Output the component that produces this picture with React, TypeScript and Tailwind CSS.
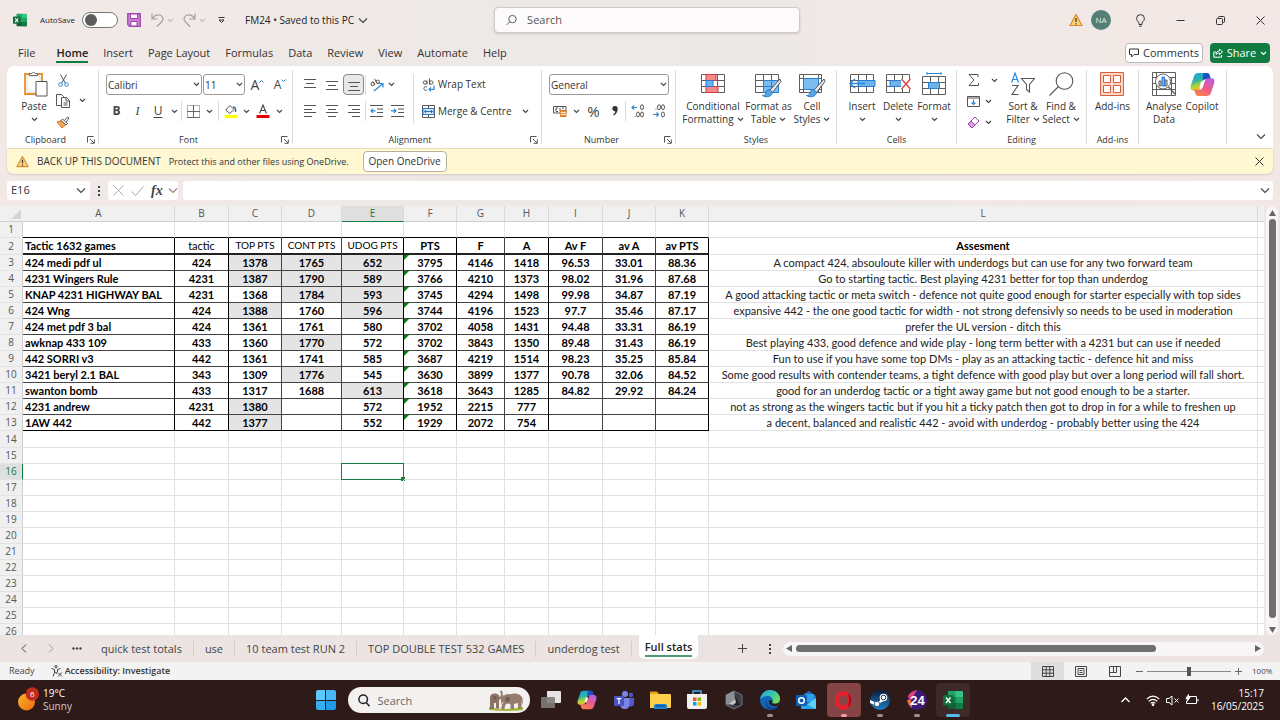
import React from 'react';

type Kids = { children?: React.ReactNode; className?: string };

const Chev = ({ className = 'text-[#444]' }: { className?: string }) => (
  <svg width="7" height="5" viewBox="0 0 7 5" fill="none" stroke="currentColor" strokeWidth="1.1" className={`shrink-0 ${className}`}>
    <path d="M1 1l2.500 2.500L6 1" />
  </svg>
);

const WideChev = ({ className = 'text-[#444]' }: { className?: string }) => (
  <svg width="10" height="7" viewBox="0 0 10 7" fill="none" stroke="currentColor" strokeWidth="1.1" className={`shrink-0 ${className}`}>
    <path d="M1 1.500l4 4 4-4" />
  </svg>
);

const Btn = ({ label, className = '', children }: Kids & { label: string }) => (
  <button type="button" aria-label={label} className={`flex shrink-0 items-center justify-center ${className}`}>
    {children}
  </button>
);

const VSep = ({ className = '' }: { className?: string }) => <div className={`w-px shrink-0 bg-[#dcdcdc] ${className}`} />;

const Launcher = () => (
  <svg width="8" height="8" viewBox="0 0 8 8" fill="none" stroke="#555" strokeWidth="1">
    <path d="M.5 6.500v-6h6M3 3l4 4M7.300 3.500v3.800H3.500" />
  </svg>
);

function Group({ label, launcher, className = '', children }: Kids & { label: string; launcher?: boolean }) {
  return (
    <section className={`flex shrink-0 ${className}`}>
      <div className="flex min-w-0 flex-1 flex-col">
        <div className="flex-1">{children}</div>
        <div className="flex h-[17px] items-center text-[9px] leading-3 text-[#333]">
          <span className="flex-1 text-center whitespace-nowrap">{label}</span>
          {launcher && (
            <Btn label={`${label} settings`} className="w-[14px]">
              <Launcher />
            </Btn>
          )}
        </div>
      </div>
      <VSep className="my-1" />
    </section>
  );
}

function Big({ icon, lines, below, inline, className = '' }: { icon: React.ReactNode; lines: string[]; below?: boolean; inline?: boolean; className?: string }) {
  return (
    <button type="button" className={`flex shrink-0 flex-col items-center text-[10px] leading-[13px] whitespace-nowrap text-[#333] ${className}`}>
      <span className="mb-1 flex h-6 items-center justify-center">{icon}</span>
      {lines.map((l, i) => (
        <span key={l} className="flex items-center gap-[3px]">
          {l}
          {inline && i === lines.length - 1 && <Chev />}
        </span>
      ))}
      {below && (
        <span className="flex h-[13px] items-center">
          <Chev />
        </span>
      )}
    </button>
  );
}

function Combo({ label, value, className = '' }: { label: string; value: string; className?: string }) {
  return (
    <div className={`grid h-[21px] items-center ${className}`}>
      <select aria-label={label} className="h-full w-full appearance-none rounded-[3px] border border-[#999] bg-white pl-[1px] text-[10px] leading-4 text-[#333] [grid-area:1/1]">
        <option>{value}</option>
      </select>
      <span className="pointer-events-none mr-[2px] justify-self-end [grid-area:1/1]">
        <Chev />
      </span>
    </div>
  );
}

const ExcelLogo = ({ size }: { size: number }) => (
  <svg width={size} height={size} viewBox="0 0 20 20">
    <path d="M6 1h7v6H5V2q0-1 1-1z" fill="#21a366" />
    <path d="M12.500 1H19q1 0 1 1v5h-7.500z" fill="#33c481" />
    <path d="M5 7h7.500v6H5z" fill="#107c41" />
    <path d="M12.500 7H20v6h-7.500z" fill="#21a366" />
    <path d="M5 13h15v5q0 1-1 1H6q-1 0-1-1z" fill="#185c37" />
    <path d="M12.500 13H20v5q0 1-1 1h-6.500z" fill="#107c41" />
    <rect x="0" y="5" width="10.500" height="10.500" rx="1" fill="#0f703b" />
    <path d="M3 7.500l4.500 5.500M7.500 7.500L3 13" stroke="#fff" strokeWidth="1.500" />
  </svg>
);

const CopilotLogo = ({ size, id }: { size: number; id: string }) => (
  <svg width={size} height={size} viewBox="0 0 24 24">
    <defs>
      <linearGradient id={`${id}a`} x1="0" y1="0" x2="0.300" y2="1">
        <stop offset="0" stopColor="#1a9ee8" />
        <stop offset="0.450" stopColor="#2bb5a8" />
        <stop offset="0.750" stopColor="#b5d334" />
        <stop offset="1" stopColor="#f7b52c" />
      </linearGradient>
      <linearGradient id={`${id}b`} x1="0.800" y1="0" x2="0.200" y2="1">
        <stop offset="0" stopColor="#b65fe6" />
        <stop offset="0.500" stopColor="#ee5a8c" />
        <stop offset="1" stopColor="#f9824a" />
      </linearGradient>
    </defs>
    <path d="M8 1h8c2 0 2.600 1 3 2.500L20 7h-5c-2 0-2.700 1-3.200 2.500L9.500 16C9 17.300 8 18 6.500 18H4c-3 0-4-2-3.200-5L4 3.500C4.600 1.800 6 1 8 1z" fill={`url(#${id}a)`} />
    <path d="M13 1h3c2 0 2.600 1 3 2.500L20 7h-5c-1.500 0-2.500.5-3 1.500z" fill="#1b50c8" />
    <path d="M16 23H8c-2 0-2.600-1-3-2.500L4 17h5c2 0 2.700-1 3.200-2.500L14.500 8C15 6.700 16 6 17.500 6H20c3 0 4 2 3.200 5L20 20.500c-.6 1.700-2 2.500-4 2.500z" fill={`url(#${id}b)`} />
    <path d="M10.500 9h3.200l-1.800 6H9z" fill="#fff" opacity="0.900" />
  </svg>
);

const WarnIcon = ({ size }: { size: number }) => (
  <svg width={size} height={size} viewBox="0 0 14 14">
    <path d="M7 1.500L13 12.500H1z" fill="#fbd27a" stroke="#e08a2c" strokeWidth="1.200" strokeLinejoin="round" />
    <path d="M7 5v4M7 10.200v1.300" stroke="#333" strokeWidth="1.300" />
  </svg>
);

const CloseIcon = () => (
  <svg width="9" height="9" viewBox="0 0 9 9" stroke="#333" strokeWidth="1">
    <path d="M.5.500l8 8M8.500.500l-8 8" />
  </svg>
);

const Lines = ({ rows }: { rows: number[][] }) => (
  <svg width="14" height="14" viewBox="0 0 14 14" stroke="#555" strokeWidth="1">
    {rows.map(([y, a, b]) => (
      <path key={y} d={`M${a} ${y + 0.5}H${b}`} />
    ))}
  </svg>
);

const Grid = () => (
  <path d="M.5.500h23v18H.5zM.5 6.500h23M.5 12.500h23M8.500.500v18M16.500.500v18" fill="#fff" stroke="#605e5c" />
);

const Brush = () => (
  <>
    <path d="M25 5L15 16l2.500 2.500L26 7.500z" fill="#e8e8e8" stroke="#555" />
    <path d="M15 15.500c-3 0-4 2-4.500 4.500-.3 1-1.500 1.500-3 1.500 3 2 9 2 10-3z" fill="#58a6e0" stroke="#2b7cd3" />
  </>
);

function TitleBar() {
  return (
    <header className="flex h-10 shrink-0 items-center">
      <div className="flex w-[494px] shrink-0 items-center pl-[13px]">
        <ExcelLogo size={14} />
        <label htmlFor="autosave" className="ml-[13px] w-[42px] text-[8px] whitespace-nowrap text-[#222]">AutoSave</label>
        <input
          id="autosave"
          type="checkbox"
          className="h-4 w-9 appearance-none rounded-full border border-[#777] bg-white before:mt-[1px] before:ml-[2px] before:block before:size-3 before:rounded-full before:bg-[#5c5c5c]"
        />
        <Btn label="Save" className="ml-2 w-4">
          <svg width="14" height="14" viewBox="0 0 14 14">
            <path d="M.7.700h12.600v12.600H2.500L.700 11.500z" fill="#c67fd0" stroke="#a044ad" strokeWidth="1.200" />
            <path d="M3.500 1h7v4.500h-7zM4 8.500h6V13H4z" fill="#fff" stroke="#a044ad" />
          </svg>
        </Btn>
        <Btn label="Undo" className="ml-[7px] w-4">
          <svg width="13" height="14" viewBox="0 0 13 14" fill="none" stroke="#a5a09f" strokeWidth="1.200">
            <path d="M1 .5v5.500h5.500M1.200 6C3 3 5.500 1.500 8.500 2c3.500.7 4.500 4.500 2 7L6 13.500" />
          </svg>
        </Btn>
        <Chev className="ml-[2px] text-[#bbb]" />
        <Btn label="Redo" className="ml-[7px] w-4">
          <svg width="13" height="14" viewBox="0 0 13 14" fill="none" stroke="#a5a09f" strokeWidth="1.200">
            <path d="M12 .5v5.500H6.500M11.800 6C10 3 7.500 1.500 4.500 2 1 2.700 0 6.500 2.500 9L7 13.500" />
          </svg>
        </Btn>
        <Chev className="ml-[2px] text-[#bbb]" />
        <Btn label="Customise toolbar" className="ml-[7px] w-4">
          <svg width="7" height="7" viewBox="0 0 7 7" fill="none" stroke="#333">
            <path d="M.5.500h6M1 3l2.500 2.500L6 3z" />
          </svg>
        </Btn>
        <button type="button" className="ml-4 flex items-center gap-1 text-[10px] whitespace-nowrap text-[#222]">
          FM24 • Saved to this PC <WideChev />
        </button>
      </div>
      <div className="flex h-[26px] w-[306px] items-center gap-[10px] rounded-[4px] border border-[#cfc9c7] bg-[#fcfafa] px-[11px] shadow-sm">
        <svg width="12" height="12" viewBox="0 0 12 12" fill="none" stroke="#555">
          <circle cx="7" cy="5" r="4" />
          <path d="M4.200 7.800L.7 11.300" />
        </svg>
        <input aria-label="Search" placeholder="Search" className="w-full min-w-0 bg-transparent text-[11px] outline-none placeholder:text-[#555]" />
      </div>
      <div className="flex flex-1 items-center justify-end">
        <WarnIcon size={14} />
        <button type="button" className="mr-[9px] ml-2 size-5 shrink-0 rounded-full bg-[#557f74] text-[8px] text-[#e5eeea]">NA</button>
        <Btn label="Tips" className="w-10">
          <svg width="9" height="13" viewBox="0 0 9 13" fill="none" stroke="#333">
            <path d="M3 8.500C1.500 7.500.6 6 .6 4.500a3.900 3.900 0 017.800 0C8.400 6 7.500 7.500 6 8.500v2H3zM3.300 12.200h2.400" />
          </svg>
        </Btn>
        <Btn label="Minimise" className="w-10">
          <svg width="9" height="3" viewBox="0 0 9 3" stroke="#333"><path d="M.5 1.500h8" /></svg>
        </Btn>
        <Btn label="Restore" className="w-10">
          <svg width="9" height="9" viewBox="0 0 9 9" fill="none" stroke="#333">
            <path d="M2.500 2V1.500q0-1 1-1h4q1 0 1 1v4q0 1-1 1H7" />
            <rect x=".5" y="2.500" width="6" height="6" rx="1" />
          </svg>
        </Btn>
        <Btn label="Close" className="w-10"><CloseIcon /></Btn>
      </div>
    </header>
  );
}

const menus = ['Insert', 'Page Layout', 'Formulas', 'Data', 'Review', 'View', 'Automate', 'Help'];

function MenuTabs() {
  return (
    <nav className="flex h-[26px] shrink-0 items-center gap-[15px] pr-[10px] pl-[18px] text-[11px] leading-4 text-[#333]">
      <a href="#file">File</a>
      <a href="#home" className="ml-[6px] border-b-2 border-[#107c41] pt-[2px] font-semibold text-[#222]">Home</a>
      {menus.map((m) => (
        <a key={m} href={`#${m}`} className="whitespace-nowrap">{m}</a>
      ))}
      <div className="ml-auto flex gap-[7px]">
        <button type="button" className="flex h-5 w-[78px] items-center justify-center gap-1 rounded-[4px] border border-[#bbb] bg-white text-[11px]">
          <svg width="10" height="10" viewBox="0 0 10 10" fill="none" stroke="#333"><path d="M.5 1h9v5.500H5L2.500 9V6.500h-2z" /></svg>
          Comments
        </button>
        <button type="button" className="flex h-5 w-[60px] items-center justify-center gap-1 rounded-[4px] bg-[#107c41] text-[11px] text-white">
          <svg width="10" height="10" viewBox="0 0 10 10" fill="none" stroke="#fff"><path d="M3 4H.8v5.200h7.700V7M3 6.500C3 4 4.500 3 6.500 3V1L9.500 4l-3 2.500V5C5 5 4 5.500 3 6.500z" /></svg>
          Share
          <Chev className="text-white" />
        </button>
      </div>
    </nav>
  );
}

function Ribbon() {
  return (
    <div className="mx-[7px] flex h-[82px] shrink-0 rounded-t-[7px] bg-white">
      <Group label="Clipboard" launcher className="w-[92px]">
        <div className="flex pt-[6px] pl-[12px]">
          <Big
            className="w-[30px]"
            lines={['Paste']}
            below
            icon={
              <svg width="24" height="26" viewBox="0 0 24 26" className="ml-1">
                <path d="M1 3h17v20H1z" fill="#fff" stroke="#e8912d" strokeWidth="1.800" />
                <path d="M3 5h13v16H3z" fill="#fff" stroke="#ccc" strokeWidth="0.700" />
                <path d="M5.500 4.500V2.500h2.500Q9.500-.5 11 2.500h2.500v2z" fill="#fff" stroke="#666" />
                <path d="M12 10.500h11v14.500H12z" fill="#fff" stroke="#555" />
              </svg>
            }
          />
          <div className="flex flex-col items-center gap-1 pl-1">
            <Btn label="Cut" className="h-4 w-5">
              <svg width="11" height="13" viewBox="0 0 11 13" fill="none">
                <path d="M2.500.5L7.500 9.500M8.500.5L3.500 9.500" stroke="#555" />
                <circle cx="2.500" cy="10.500" r="1.800" stroke="#2b88d8" />
                <circle cx="8.500" cy="10.500" r="1.800" stroke="#2b88d8" />
              </svg>
            </Btn>
            <Btn label="Copy" className="h-[18px] w-5">
              <svg width="14" height="14" viewBox="0 0 14 14" fill="#fff" stroke="#555">
                <path d="M.5.500h5l2 2v9h-7z" />
                <path d="M5.500 3.500h5l3 3v7h-8zM10 3.500V7h3.500M7.500 9h4M7.500 11h4" />
              </svg>
            </Btn>
            <Btn label="Format painter" className="h-4 w-5">
              <svg width="14" height="13" viewBox="0 0 14 13">
                <path d="M1 6l5 6 4-3.500L5.500 4.500z" fill="#f7a65a" stroke="#d9771e" />
                <path d="M5 4.500l1.500-1.500 5 4.500L10 9z" fill="#fff" stroke="#555" />
                <path d="M8.500 4.500l3-3.500 1.500 1-2.800 4" fill="#fff" stroke="#555" />
              </svg>
            </Btn>
          </div>
          <div className="flex h-[56px] items-center pl-[6px]"><Chev /></div>
        </div>
      </Group>

      <Group label="Font" launcher className="w-[194px]">
        <div className="flex flex-col gap-[6px] pt-2 pl-[7px]">
          <div className="flex items-center gap-px">
            <Combo label="Font name" value="Calibri" className="w-24" />
            <Combo label="Font size" value="11" className="w-[42px]" />
            <Btn label="Increase font size" className="w-[23px] text-[14px] text-[#444]">
              A<svg width="5" height="4" viewBox="0 0 5 4" fill="none" stroke="#2b7cd3" className="mb-2"><path d="M.5 3.500l2-2 2 2" /></svg>
            </Btn>
            <Btn label="Decrease font size" className="w-[20px] text-[12px] text-[#444]">
              A<svg width="5" height="4" viewBox="0 0 5 4" fill="none" stroke="#2b7cd3" className="mb-2"><path d="M.5.500l2 2 2-2" /></svg>
            </Btn>
          </div>
          <div className="flex h-5 items-center text-[12px] text-[#444]">
            <Btn label="Bold" className="w-[21px] font-bold">B</Btn>
            <Btn label="Italic" className="w-[21px] font-['Liberation_Serif',serif] italic">I</Btn>
            <Btn label="Underline" className="w-5 underline underline-offset-2">U</Btn>
            <Btn label="Underline options" className="w-[13px]"><Chev /></Btn>
            <VSep className="h-5" />
            <Btn label="Borders" className="w-[22px]">
              <svg width="13" height="13" viewBox="0 0 13 13" fill="none" stroke="#666">
                <path d="M.5.500h12v12H.5z" strokeDasharray="1 1" />
                <path d="M6.500 0v13M0 6.500h13M0 12.500h13" />
              </svg>
            </Btn>
            <Btn label="Border options" className="w-[11px]"><Chev /></Btn>
            <VSep className="ml-[3px] h-5" />
            <Btn label="Fill colour" className="w-[23px]">
              <svg width="14" height="14" viewBox="0 0 14 14">
                <path d="M6 1.500L1.800 6l4 3.500L10 5.500z" fill="#fff" stroke="#555" />
                <path d="M9 3c2 0 3 1.500 2.500 5" fill="none" stroke="#1f5fa8" strokeWidth="1.400" />
                <path d="M.5 11h13v3H.5z" fill="#ffff00" />
              </svg>
            </Btn>
            <Btn label="Fill options" className="w-[9px]"><Chev /></Btn>
            <Btn label="Font colour" className="w-6">
              <svg width="14" height="14" viewBox="0 0 14 14">
                <path d="M3.500 9.500L7 1l3.500 8.500M4.700 6.500h4.600" fill="none" stroke="#444" strokeWidth="1.100" />
                <path d="M.5 11h13v3H.5z" fill="#e80000" />
              </svg>
            </Btn>
            <Btn label="Font colour options" className="w-[9px]"><Chev /></Btn>
          </div>
        </div>
      </Group>

      <Group label="Alignment" launcher className="w-[249px]">
        <div className="flex pt-2 pl-[6px]">
          <div className="flex w-[114px] flex-col gap-[6px]">
            <div className="flex h-[21px] items-center">
              <Btn label="Top align" className="w-[22px]"><Lines rows={[[1, 1, 13], [5, 3, 11], [9, 1, 13]]} /></Btn>
              <Btn label="Middle align" className="w-[22px]"><Lines rows={[[3, 1, 13], [7, 3, 11], [11, 1, 13]]} /></Btn>
              <Btn label="Bottom align" className="h-[21px] w-[21px] rounded-[4px] border border-[#888] bg-[#e8e8e8]"><Lines rows={[[4, 1, 13], [8, 3, 11], [12, 1, 13]]} /></Btn>
              <VSep className="ml-px h-5" />
              <Btn label="Orientation" className="w-[22px]">
                <svg width="14" height="14" viewBox="0 0 14 14" fill="none" stroke="#555">
                  <circle cx="2.700" cy="6" r="1.700" />
                  <path d="M2.800 3.200l2.200 3.600M4.500.800l3.200 5" />
                  <circle cx="7.800" cy="3.800" r="1.700" />
                  <path d="M4 13l8.500-7M9 5.500h4v4" stroke="#2b88d8" strokeWidth="1.200" />
                </svg>
              </Btn>
              <Chev />
            </div>
            <div className="flex h-5 items-center">
              <Btn label="Align left" className="w-[22px]"><Lines rows={[[1, 1, 13], [5, 1, 9], [8, 1, 13], [12, 1, 9]]} /></Btn>
              <Btn label="Centre" className="w-[22px]"><Lines rows={[[1, 1, 13], [5, 3, 11], [8, 1, 13], [12, 3, 11]]} /></Btn>
              <Btn label="Align right" className="w-[21px]"><Lines rows={[[1, 1, 13], [5, 5, 13], [8, 1, 13], [12, 5, 13]]} /></Btn>
              <VSep className="ml-px h-5" />
              <Btn label="Decrease indent" className="w-[21px]">
                <svg width="13" height="12" viewBox="0 0 13 12" fill="none" stroke="#555">
                  <path d="M0 .5h13M7 4h6M7 7.500h6M0 11.500h13" />
                  <path d="M5.500 5.800H1M3 3.800L1 5.800l2 2" stroke="#2b88d8" strokeWidth="1.200" />
                </svg>
              </Btn>
              <Btn label="Increase indent" className="w-[21px]">
                <svg width="13" height="12" viewBox="0 0 13 12" fill="none" stroke="#555">
                  <path d="M0 .5h13M7 4h6M7 7.500h6M0 11.500h13" />
                  <path d="M0 5.800h4.500M3 3.800l2 2-2 2" stroke="#2b88d8" strokeWidth="1.200" />
                </svg>
              </Btn>
            </div>
          </div>
          <VSep className="h-[50px]" />
          <div className="flex flex-col gap-[6px] pl-2 text-[10px] whitespace-nowrap text-[#333]">
            <button type="button" className="flex h-[21px] items-center gap-[3px]">
              <svg width="13" height="14" viewBox="0 0 13 14" fill="none" stroke="#555">
                <circle cx="3" cy="4.500" r="1.700" />
                <path d="M5 2.500v4M7.500.5v6" />
                <circle cx="9.300" cy="4.500" r="1.700" />
                <path d="M5 9a1.900 1.900 0 100 3" />
                <path d="M12 7.500v3.800H7M9 9.300l-2 2 2 2" stroke="#2b88d8" strokeWidth="1.200" />
              </svg>
              Wrap Text
            </button>
            <div className="flex items-center">
              <button type="button" className="flex h-5 items-center gap-[3px]">
                <svg width="13" height="13" viewBox="0 0 13 13" fill="none">
                  <path d="M.5.500h12v12H.5z" fill="#fff" stroke="#555" />
                  <path d="M1 3.500h11v6H1z" fill="#cfe6f8" stroke="#2b7cd3" />
                  <path d="M6.500.5v3M6.500 9.500v3" stroke="#555" />
                  <path d="M2.500 6.500h8M4 5L2.500 6.500 4 8M9 5l1.500 1.500L9 8" stroke="#1f6fc0" />
                </svg>
                Merge &amp; Centre
              </button>
              <Btn label="Merge options" className="ml-[6px] w-4"><Chev /></Btn>
            </div>
          </div>
        </div>
      </Group>

      <Group label="Number" launcher className="w-[134px]">
        <div className="flex flex-col gap-[6px] pt-2 pl-[7px]">
          <Combo label="Number format" value="General" className="w-[120px]" />
          <div className="flex h-5 items-center text-[#444]">
            <Btn label="Accounting format" className="w-[21px]">
              <svg width="14" height="12" viewBox="0 0 14 12" fill="none">
                <path d="M.5 1.500h12.500v6.500H.5z" stroke="#555" />
                <path d="M5 3H3v3.500h2M7 3v3.500M9 3h2" stroke="#555" />
                <path d="M7.500 5.500h5.500v6H7.500z" fill="#f09a4a" stroke="#d9771e" />
                <path d="M7.500 7.500H13M7.500 9.500H13" stroke="#fff" strokeWidth="0.700" />
              </svg>
            </Btn>
            <Btn label="Accounting options" className="w-[12px]"><Chev /></Btn>
            <Btn label="Percent" className="w-[23px] text-[15px]">%</Btn>
            <Btn label="Comma style" className="w-[20px]">
              <svg width="6" height="10" viewBox="0 0 6 10" fill="#333"><path d="M3 0a2.600 2.600 0 012.700 2.800C5.700 6 4 8.500 1.500 9.500L1 8.700C2.500 7.800 3.200 6.500 3.200 5.300 1.500 5.500.4 4.300.4 2.800A2.600 2.600 0 013 0z" /></svg>
            </Btn>
            <VSep className="h-5" />
            <Btn label="Increase decimal" className="w-[23px]">
              <svg width="14" height="14" viewBox="0 0 14 14" fill="none" stroke="#555">
                <path d="M6 3.500H1M3 1.500l-2 2 2 2" stroke="#2b88d8" strokeWidth="1.200" />
                <ellipse cx="11" cy="3.200" rx="1.500" ry="2.500" />
                <ellipse cx="7" cy="10.500" rx="1.500" ry="2.500" />
                <ellipse cx="11" cy="10.500" rx="1.500" ry="2.500" />
                <path d="M3.500 12.500h1" />
              </svg>
            </Btn>
            <Btn label="Decrease decimal" className="w-[20px]">
              <svg width="14" height="14" viewBox="0 0 14 14" fill="none" stroke="#555">
                <path d="M1 10.500h5M4.500 8.500l2 2-2 2" stroke="#2b88d8" strokeWidth="1.200" />
                <ellipse cx="7" cy="3.200" rx="1.500" ry="2.500" />
                <ellipse cx="11" cy="3.200" rx="1.500" ry="2.500" />
                <ellipse cx="11" cy="10.500" rx="1.500" ry="2.500" />
                <path d="M3.500 5.200h1" />
              </svg>
            </Btn>
          </div>
        </div>
      </Group>

      <Group label="Styles" className="w-[161px]">
        <div className="flex pt-[6px] pl-[6px]">
          <Big
            className="w-[62px]"
            lines={['Conditional', 'Formatting']}
            inline
            icon={
              <svg width="24" height="20" viewBox="0 0 24 20">
                <Grid />
                <path d="M5 .5h10v6H5zM5 12.500h12v6H5z" fill="#f58a8a" stroke="#d83b3b" />
                <path d="M5 6.500h7v6H5z" fill="#6db3ea" stroke="#2b7cd3" />
              </svg>
            }
          />
          <Big
            className="w-[49px]"
            lines={['Format as', 'Table']}
            inline
            icon={
              <svg width="27" height="24" viewBox="0 0 27 24" className="mt-1">
                <Grid />
                <path d="M8.500 6.500h15v12h-15z" fill="#7dbcee" stroke="#2b7cd3" />
                <path d="M16.500 6.500v12M8.500 12.500h15" stroke="#2b7cd3" />
                <Brush />
              </svg>
            }
          />
          <Big
            className="w-[38px]"
            lines={['Cell', 'Styles']}
            inline
            icon={
              <svg width="27" height="24" viewBox="0 0 27 24" className="mt-1">
                <path d="M.5.500h22v18H.5zM.5 4.500h22M4.500.500v18M.5 15.500h22M19.500.500v18" fill="#fff" stroke="#605e5c" />
                <path d="M4.500 4.500h15v11h-15z" fill="#7dbcee" stroke="#2b7cd3" />
                <Brush />
              </svg>
            }
          />
        </div>
      </Group>

      <Group label="Cells" className="w-[120px]">
        <div className="flex pt-[6px] pl-[7px]">
          <Big
            className="w-9"
            lines={['Insert']}
            below
            icon={
              <svg width="27" height="20" viewBox="0 0 27 20">
                <g transform="translate(1)"><Grid /></g>
                <path d="M9 6.500h17v6H9z" fill="#6db3ea" stroke="#2b7cd3" />
                <path d="M16 9.500H1M6 5L1 9.500 6 14" fill="none" stroke="#2b88d8" strokeWidth="1.500" />
              </svg>
            }
          />
          <Big
            className="w-9"
            lines={['Delete']}
            below
            icon={
              <svg width="25" height="20" viewBox="0 0 25 20">
                <Grid />
                <path d="M4 6.500h12v6H4z" fill="#6db3ea" stroke="#2b7cd3" />
                <path d="M15 5h10v10H15z" fill="#fff" />
                <path d="M15.500 5l9 10M24.500 5l-9 10" stroke="#e0403c" strokeWidth="1.300" />
              </svg>
            }
          />
          <Big
            className="w-9"
            lines={['Format']}
            below
            icon={
              <svg width="24" height="24" viewBox="0 0 24 24">
                <path d="M5 1.500h14M5 0v3M19 0v3" stroke="#2b88d8" />
                <g transform="translate(0 4)">
                  <Grid />
                  <path d="M6.500 6.500h11v6h-11z" fill="#6db3ea" stroke="#2b7cd3" />
                </g>
              </svg>
            }
          />
        </div>
      </Group>

      <Group label="Editing" className="w-[130px]">
        <div className="flex pt-[6px] pl-[6px]">
          <div className="flex w-[34px] flex-col items-start gap-[5px]">
            <Btn label="AutoSum" className="h-4 gap-3 pl-[5px]">
              <svg width="11" height="12" viewBox="0 0 11 12" fill="none" stroke="#555"><path d="M10 3V.5H1L6 6 1 11.500h9.500V9" /></svg>
              <Chev />
            </Btn>
            <Btn label="Fill" className="h-4 gap-[5px] pl-1">
              <svg width="13" height="11" viewBox="0 0 13 11" fill="none">
                <path d="M.5.500h12v10H.5zM.5 2h12" stroke="#555" />
                <path d="M6.500 3.500v5M4.500 6.500l2 2 2-2" stroke="#2b88d8" strokeWidth="1.200" />
              </svg>
              <Chev />
            </Btn>
            <Btn label="Clear" className="h-4 gap-[5px] pl-1">
              <svg width="13" height="13" viewBox="0 0 13 13">
                <path d="M1 8l7-7 4 4-7 7z" fill="#fff" stroke="#a044ad" />
                <path d="M1 8l3-3 4 4-3 3z" fill="#d9a3e0" stroke="#a044ad" />
              </svg>
              <Chev />
            </Btn>
          </div>
          <Big
            className="ml-2 w-[36px]"
            lines={['Sort &', 'Filter']}
            inline
            icon={
              <svg width="24" height="24" viewBox="0 0 24 24" fill="none">
                <path d="M.7 10.500L4 1l3.500 9.500M2 7.500h4" stroke="#2b88d8" strokeWidth="1.200" />
                <path d="M1 13.500h6L1 22.500h6.500" stroke="#555" strokeWidth="1.200" />
                <path d="M10.500 6.500h13l-5 6v7.500l-3-2.500v-5z" stroke="#555" strokeWidth="1.100" />
              </svg>
            }
          />
          <Big
            className="w-10"
            lines={['Find &', 'Select']}
            inline
            icon={
              <svg width="26" height="24" viewBox="0 0 26 24" fill="none" stroke="#555" strokeWidth="1.100">
                <circle cx="16.500" cy="9" r="8.300" />
                <path d="M10.500 14.500L1.500 23.500" />
              </svg>
            }
          />
        </div>
      </Group>

      <Group label="Add-ins" className="w-[52px]">
        <div className="flex justify-center pt-[6px]">
          <Big
            lines={['Add-ins']}
            icon={
              <svg width="24" height="24" viewBox="0 0 24 24" fill="#fff" stroke="#d9603f">
                <path d="M.5.500h23v23H.5z" fill="#fbd5c8" />
                <path d="M3.500 3.500h7v7h-7zM13.500 3.500h7v7h-7zM3.500 13.500h7v7h-7zM13.500 13.500h7v7h-7z" />
              </svg>
            }
          />
        </div>
      </Group>

      <Group label="" className="w-[88px]">
        <div className="flex pt-[6px] pl-[6px]">
          <Big
            className="w-[38px]"
            lines={['Analyse', 'Data']}
            icon={
              <svg width="24" height="24" viewBox="0 0 24 24" fill="none" stroke="#605e5c">
                <path d="M.5.500h23v23H.5zM.5 5.500h23M.5 11.500h23M.5 17.500h23M4.500.500v23M19.500 5v18" fill="#fff" />
                <circle cx="11" cy="9.500" r="7.500" fill="#fff" />
                <path d="M16.500 15l6.500 7" strokeWidth="1.400" />
                <path d="M7 9h2v5H7zM13 8h2v6h-2z" fill="#ccc" />
                <path d="M10 5h2.500v9H10z" fill="#6db3ea" stroke="#2b7cd3" />
              </svg>
            }
          />
          <Big className="w-[38px]" lines={['Copilot']} icon={<CopilotLogo size={25} id="rc" />} />
        </div>
      </Group>
      <div className="flex flex-1 items-end justify-end pr-[7px] pb-2">
        <Btn label="Collapse ribbon"><WideChev /></Btn>
      </div>
    </div>
  );
}

function BackupBar() {
  return (
    <div className="mx-[7px] flex h-[26px] shrink-0 items-center rounded-b-[7px] border-t border-[#e3ddb8] bg-[#fff8d3] pl-[9px] text-[10px] whitespace-nowrap text-[#333] shadow-sm">
      <WarnIcon size={13} />
      <span className="ml-2">BACK UP THIS DOCUMENT</span>
      <span className="ml-2 text-[9px]">Protect this and other files using OneDrive.</span>
      <button type="button" className="ml-[14px] h-[21px] w-[84px] rounded-[4px] border border-[#b5b19c] bg-white">Open OneDrive</button>
      <Btn label="Dismiss" className="mr-[9px] ml-auto"><CloseIcon /></Btn>
    </div>
  );
}

function FormulaBar() {
  return (
    <div className="flex h-8 shrink-0 gap-[5px] px-[7px] pt-[7px] pb-[6px]">
      <div className="flex w-[83px] items-center rounded-[3px] bg-white pr-1">
        <input aria-label="Name box" defaultValue="E16" className="w-full min-w-0 bg-transparent pl-1 text-[11px] text-[#333] outline-none" />
        <WideChev />
      </div>
      <div className="flex w-2 flex-col items-center justify-center gap-[2px]">
        <i className="size-[2px] bg-[#444]" />
        <i className="size-[2px] bg-[#444]" />
        <i className="size-[2px] bg-[#444]" />
      </div>
      <div className="flex w-[70px] items-center rounded-[3px] bg-white pl-[5px]">
        <Btn label="Cancel">
          <svg width="11" height="11" viewBox="0 0 11 11" stroke="#aaa"><path d="M.5.500l10 10M10.500.500l-10 10" /></svg>
        </Btn>
        <Btn label="Enter" className="ml-[7px]">
          <svg width="13" height="10" viewBox="0 0 13 10" fill="none" stroke="#aaa"><path d="M.5 5.500l4 4L12.500.500" /></svg>
        </Btn>
        <Btn label="Insert function" className="ml-[7px] font-['Liberation_Serif',serif] text-[14px] font-bold text-[#444] italic">fx</Btn>
        <WideChev className="ml-auto text-[#888]" />
      </div>
      <div className="flex flex-1 items-center rounded-[3px] bg-white pr-[3px]">
        <input aria-label="Formula" className="w-full bg-transparent text-[10px] outline-none" />
        <WideChev />
      </div>
    </div>
  );
}

type Row = { cells: string[]; note: string; shade: string };

const stats: Row[] = [
  { cells: ['424 medi pdf ul', '424', '1378', '1765', '652', '3795', '4146', '1418', '96.53', '33.01', '88.36'], shade: 'CDE', note: 'A compact 424, absouloute killer with underdogs but can use for any two forward team' },
  { cells: ['4231 Wingers Rule', '4231', '1387', '1790', '589', '3766', '4210', '1373', '98.02', '31.96', '87.68'], shade: 'CDE', note: 'Go to starting tactic. Best playing 4231 better for top than underdog' },
  { cells: ['KNAP 4231 HIGHWAY BAL', '4231', '1368', '1784', '593', '3745', '4294', '1498', '99.98', '34.87', '87.19'], shade: 'DE', note: 'A good attacking tactic or meta switch - defence not quite good enough for starter especially with top sides' },
  { cells: ['424 Wng', '424', '1388', '1760', '596', '3744', '4196', '1523', '97.7', '35.46', '87.17'], shade: 'CE', note: 'expansive 442 - the one good tactic for width - not strong defensivly so needs to be used in moderation' },
  { cells: ['424 met pdf 3 bal', '424', '1361', '1761', '580', '3702', '4058', '1431', '94.48', '33.31', '86.19'], shade: '', note: 'prefer the UL version - ditch this' },
  { cells: ['awknap 433 109', '433', '1360', '1770', '572', '3702', '3843', '1350', '89.48', '31.43', '86.19'], shade: 'D', note: 'Best playing 433, good defence and wide play - long term better with a 4231 but can use if needed' },
  { cells: ['442 SORRI v3', '442', '1361', '1741', '585', '3687', '4219', '1514', '98.23', '35.25', '85.84'], shade: '', note: 'Fun to use if you have some top DMs - play as an attacking tactic - defence hit and miss' },
  { cells: ['3421 beryl 2.1 BAL', '343', '1309', '1776', '545', '3630', '3899', '1377', '90.78', '32.06', '84.52'], shade: 'D', note: 'Some good results with contender teams, a tight defence with good play but over a long period will fall short.' },
  { cells: ['swanton bomb', '433', '1317', '1688', '613', '3618', '3643', '1285', '84.82', '29.92', '84.24'], shade: 'E', note: 'good for an underdog tactic or a tight away game but not good enough to be a starter.' },
  { cells: ['4231 andrew', '4231', '1380', '', '572', '1952', '2215', '777', '', '', ''], shade: 'C', note: 'not as strong as the wingers tactic but if you hit a ticky patch then got to drop in for a while to freshen up' },
  { cells: ['1AW 442', '442', '1377', '', '552', '1929', '2072', '754', '', '', ''], shade: 'C', note: 'a decent, balanced and realistic 442 - avoid with underdog - probably better using the 424' },
];

const heads = ['Tactic 1632 games', 'tactic', 'TOP PTS', 'CONT PTS', 'UDOG PTS', 'PTS', 'F', 'A', 'Av F', 'av A', 'av PTS'];
const headStyle = (i: number) => {
  if (i === 0) return 'pl-[2px] font-bold';
  if (i === 1) return 'text-center';
  return i < 5 ? 'text-center text-[10px]' : 'text-center font-bold';
};
const letters = 'ABCDEFGHIJK'.split('');
const heavyRight = 'ABEFHK';
const emptyRows = [14, 15, 16, 17, 18, 19, 20, 21, 22, 23, 24, 25, 26];

const rightEdge = (c: string) => (heavyRight.includes(c) ? 'border-r border-r-black' : 'border-r border-r-[#444]');

function RowHead({ n, active }: { n: number; active?: boolean }) {
  return (
    <th
      scope="row"
      className={`border-r border-b border-b-[#e4e4e4] p-0 text-center font-['Open_Sans',sans-serif] text-[10px] font-normal ${active ? 'border-r-[#107c41] bg-[#dfdfdf] text-[#107c41]' : 'border-r-[#cfcfcf] bg-[#f0f0f0] text-[#555]'}`}
    >
      {n}
    </th>
  );
}

function Sheet() {
  return (
    <div className="flex min-h-0 flex-1 overflow-hidden">
      <div className="min-w-0 flex-1 overflow-hidden bg-white">
        <table className="w-full table-fixed border-separate border-spacing-0 font-['Lato',sans-serif] text-[11px] leading-[15px] text-black">
          <colgroup>
            <col className="w-[23px]" />
            <col className="w-[152px]" />
            <col className="w-[54px]" />
            <col className="w-[53px]" />
            <col className="w-[60px]" />
            <col className="w-[62px]" />
            <col className="w-[53px]" />
            <col className="w-[48px]" />
            <col className="w-[44px]" />
            <col className="w-[54px]" />
            <col className="w-[53px]" />
            <col className="w-[53px]" />
            <col />
            <col className="w-[6px]" />
          </colgroup>
          <thead className="font-['Open_Sans',sans-serif] text-[10px] text-[#555]">
            <tr className="h-4">
              <th className="border-b border-b-[#cfcfcf] bg-[#f0f0f0] p-0">
                <svg width="10" height="10" viewBox="0 0 10 10" className="mr-[2px] ml-auto"><path d="M10 0v10H0z" fill="#d5d5d5" /></svg>
              </th>
              {letters.map((c) => (
                <th
                  key={c}
                  scope="col"
                  className={`border-r border-b border-r-[#dadada] p-0 font-normal ${c === 'E' ? 'border-b-[#107c41] bg-[#dfdfdf] text-[#107c41]' : 'border-b-[#cfcfcf] bg-[#f0f0f0]'}`}
                >
                  {c}
                </th>
              ))}
              <th scope="col" className="border-r border-b border-r-[#dadada] border-b-[#cfcfcf] bg-[#f0f0f0] p-0 font-normal">L</th>
              <th className="border-b border-b-[#cfcfcf] bg-[#f0f0f0] p-0" />
            </tr>
          </thead>
          <tbody>
            <tr className="h-4">
              <RowHead n={1} />
              {letters.map((c) => (
                <td key={c} className="border-r border-b border-r-[#e1e1e1] border-b-black p-0" />
              ))}
              <td className="border-r border-b border-[#e1e1e1] p-0" />
              <td className="border-b border-[#e1e1e1] p-0" />
            </tr>
            <tr className="h-[17px]">
              <RowHead n={2} />
              {heads.map((h, i) => (
                <td key={h} className={`border-b-2 border-b-[#222] p-0 whitespace-nowrap ${rightEdge(letters[i])} ${headStyle(i)}`}>
                  {h}
                </td>
              ))}
              <td className="border-r border-b border-[#e1e1e1] p-0 text-center align-top font-bold">Assesment</td>
              <td className="border-b border-[#e1e1e1] p-0" />
            </tr>
            {stats.map((r, k) => (
              <tr key={r.cells[0]} className="h-4">
                <RowHead n={k + 3} />
                {r.cells.map((v, i) => {
                  const c = letters[i];
                  return (
                    <td
                      key={c}
                      className={`relative border-b p-0 font-bold whitespace-nowrap ${k === stats.length - 1 ? 'border-b-black' : 'border-b-[#444]'} ${rightEdge(c)} ${r.shade.includes(c) ? 'bg-[#e4e4e4]' : ''} ${i === 0 ? 'pl-[2px]' : 'text-center'}`}
                    >
                      {v}
                      {c === 'F' && (
                        <svg width="5" height="5" viewBox="0 0 5 5" className="absolute top-0 left-0"><path d="M0 0h5L0 5z" fill="#107c10" /></svg>
                      )}
                    </td>
                  );
                })}
                <td className="border-r border-b border-[#e1e1e1] p-0 text-center whitespace-nowrap text-[#222]">{r.note}</td>
                <td className="border-b border-[#e1e1e1] p-0" />
              </tr>
            ))}
            {emptyRows.map((n) => (
              <tr key={n} className={n === 14 ? 'h-[17px]' : 'h-4'}>
                <RowHead n={n} active={n === 16} />
                {letters.map((c) => (
                  <td key={c} className="relative border-r border-b border-[#e1e1e1] p-0">
                    {n === 16 && c === 'E' && (
                      <>
                        <span className="absolute -top-px -right-px -bottom-px -left-px border border-[#1a7a44]" />
                        <span className="absolute -right-[2px] -bottom-[2px] size-[4px] bg-[#1a7a44]" />
                      </>
                    )}
                  </td>
                ))}
                <td className="border-r border-b border-[#e1e1e1] p-0" />
                <td className="border-b border-[#e1e1e1] p-0" />
              </tr>
            ))}
          </tbody>
        </table>
      </div>
      <div className="flex w-4 shrink-0 flex-col items-center bg-[#eee6e4]">
        <div className="flex w-3 flex-1 flex-col items-center gap-[3px] rounded-full bg-[#f7f5f5] pt-1 pb-[2px]">
          <svg width="7" height="6" viewBox="0 0 7 6"><path d="M3.500 0L7 6H0z" fill="#666" /></svg>
          <div className="w-[7px] flex-1 rounded-full bg-[#6f6f6f]" />
          <svg width="7" height="6" viewBox="0 0 7 6" className="mt-[6px]"><path d="M3.500 6L7 0H0z" fill="#666" /></svg>
        </div>
      </div>
    </div>
  );
}

const sheets = ['quick test totals', 'use', '10 team test RUN 2', 'TOP DOUBLE TEST 532 GAMES', 'underdog test'];

function SheetTabs() {
  return (
    <div className="flex h-[27px] shrink-0 items-center bg-[#ece4e3] text-[11px] leading-4 whitespace-nowrap text-[#444]">
      <Btn label="Previous sheet" className="ml-[10px] w-7">
        <svg width="6" height="9" viewBox="0 0 6 9" fill="none" stroke="#444"><path d="M5 .5l-4 4 4 4" /></svg>
      </Btn>
      <Btn label="Next sheet" className="w-[26px]">
        <svg width="6" height="9" viewBox="0 0 6 9" fill="none" stroke="#999"><path d="M1 .5l4 4-4 4" /></svg>
      </Btn>
      <Btn label="More sheets" className="w-[26px]">
        <svg width="10" height="3" viewBox="0 0 10 3" fill="#444"><circle cx="1.500" cy="1.500" r="1.200" /><circle cx="5" cy="1.500" r="1.200" /><circle cx="8.500" cy="1.500" r="1.200" /></svg>
      </Btn>
      {sheets.map((s) => (
        <button key={s} type="button" className="h-4 border-r border-[#d6cdcb] px-[11px]">{s}</button>
      ))}
      <button type="button" className="ml-[7px] self-start rounded-b-[5px] bg-white px-[6px] pt-[4px] pb-[2px] font-semibold text-[#222]">
        <span className="block border-b-2 border-[#4f9a75] leading-4">Full stats</span>
      </button>
      <VSep className="ml-1 h-4" />
      <Btn label="New sheet" className="ml-[27px] w-6">
        <svg width="9" height="9" viewBox="0 0 9 9" stroke="#444"><path d="M4.500 0v9M0 4.500h9" /></svg>
      </Btn>
      <Btn label="Resize" className="ml-[12px] w-2">
        <svg width="2" height="10" viewBox="0 0 2 10" fill="#444"><path d="M0 0h2v2H0zM0 4h2v2H0zM0 8h2v2H0z" /></svg>
      </Btn>
      <div className="mr-4 ml-[9px] flex h-[14px] min-w-0 flex-1 items-center gap-1 rounded-full bg-[#f7f5f5] px-[3px]">
        <svg width="6" height="7" viewBox="0 0 6 7"><path d="M0 3.500L6 0v7z" fill="#666" /></svg>
        <div className="flex-1"><div className="h-[7px] w-[79%] rounded-full bg-[#6f6f6f]" /></div>
        <svg width="6" height="7" viewBox="0 0 6 7"><path d="M6 3.500L0 0v7z" fill="#666" /></svg>
      </div>
    </div>
  );
}

function StatusBar() {
  return (
    <div className="flex h-[18px] shrink-0 items-center bg-[#f4f3f3] pl-[9px] text-[9px] text-[#444]">
      <span>Ready</span>
      <button type="button" className="ml-4 flex items-center gap-[2px] font-semibold whitespace-nowrap text-[#333]">
        <svg width="12" height="12" viewBox="0 0 12 12" fill="none" stroke="#444">
          <circle cx="5" cy="1.700" r="1.200" />
          <path d="M.5 3.500l3 1v3L2 11.500M9.500 3.500l-3 1v2.500M3.500 8l1.500-1 1 2M7 7.500l4 4M11 7.500l-4 4" />
        </svg>
        Accessibility: Investigate
      </button>
      <div className="ml-auto flex h-full items-center">
        <Btn label="Normal view" className="h-full w-[33px] bg-[#dedede]">
          <svg width="12" height="11" viewBox="0 0 12 11" fill="none" stroke="#444"><path d="M.5.500h11v10H.5zM.5 3.800h11M.5 7.200h11M4.200.500v10M7.800.500v10" /></svg>
        </Btn>
        <Btn label="Page layout view" className="h-full w-[34px]">
          <svg width="12" height="11" viewBox="0 0 12 11" fill="none" stroke="#444"><path d="M.5.500h11v10H.5zM3 2.500h6v6H3zM4.500 4.500h3M4.500 6.500h3" /></svg>
        </Btn>
        <Btn label="Page break view" className="h-full w-[33px]">
          <svg width="12" height="11" viewBox="0 0 12 11" fill="none" stroke="#444"><path d="M.5.500h11v10H.5zM4.500.500v6M.5 6.500h7M7.500.500v6" /></svg>
        </Btn>
        <Btn label="Zoom out" className="w-4">
          <svg width="7" height="7" viewBox="0 0 7 7" stroke="#666"><path d="M0 3.500h7" /></svg>
        </Btn>
        <input
          type="range"
          aria-label="Zoom"
          className="h-[9px] w-[84px] appearance-none bg-[linear-gradient(#888,#888)] bg-[length:100%_1px] bg-center bg-no-repeat [&::-webkit-slider-thumb]:h-[9px] [&::-webkit-slider-thumb]:w-1 [&::-webkit-slider-thumb]:appearance-none [&::-webkit-slider-thumb]:bg-[#555]"
        />
        <Btn label="Zoom in" className="w-[14px]">
          <svg width="7" height="7" viewBox="0 0 7 7" stroke="#666"><path d="M0 3.500h7M3.500 0v7" /></svg>
        </Btn>
        <span className="w-[35px] pl-[7px] text-[8px]">100%</span>
      </div>
    </div>
  );
}

function TaskItem({ label, mark = '', className = '', children }: Kids & { label: string; mark?: string }) {
  return (
    <button type="button" aria-label={label} className={`relative flex size-[34px] items-center justify-center rounded-[4px] ${className}`}>
      {children}
      {mark && <span className={`absolute bottom-0 h-[3px] rounded-full ${mark}`} />}
    </button>
  );
}

function Taskbar() {
  return (
    <footer className="grid h-10 shrink-0 grid-cols-[1fr_661px_1fr] items-center bg-[#2e1b19] text-[10px] leading-[13px] text-white">
      <button type="button" className="flex items-center gap-1 pl-[17px] text-left">
        <svg width="22" height="26" viewBox="0 0 22 26">
          <defs>
            <linearGradient id="sun" x1="0" y1="0" x2="1" y2="1">
              <stop offset="0" stopColor="#fbb52a" />
              <stop offset="1" stopColor="#ec6a12" />
            </linearGradient>
          </defs>
          <circle cx="9.500" cy="15" r="8.500" fill="url(#sun)" />
          <circle cx="15.300" cy="7" r="6.700" fill="#c42b1c" />
          <text x="15.300" y="10" fontSize="8" textAnchor="middle" fill="#fff">6</text>
        </svg>
        <span>
          <span className="block">19°C</span>
          <span className="block text-[#cfc6c4]">Sunny</span>
        </span>
      </button>
      <div className="flex items-center pl-[6px]">
        <button type="button" aria-label="Start" className="grid size-5 shrink-0 grid-cols-2 gap-px">
          <i className="rounded-tl-[2px] bg-[#5cc8f8]" />
          <i className="rounded-tr-[2px] bg-[#4ab8f4]" />
          <i className="rounded-bl-[2px] bg-[#35aef0]" />
          <i className="rounded-br-[2px] bg-[#1f9be8]" />
        </button>
        <div className="ml-3 flex h-[26px] w-[182px] shrink-0 items-center gap-2 rounded-full bg-[#f3f1f0] pr-[6px] pl-[10px]">
          <svg width="12" height="13" viewBox="0 0 12 13" fill="none" stroke="#222" strokeWidth="1.500" className="shrink-0">
            <circle cx="5.200" cy="5.200" r="4.300" />
            <path d="M8.200 8.500l3.300 3.800" />
          </svg>
          <input aria-label="Search Windows" placeholder="Search" className="min-w-0 flex-1 bg-transparent text-[11px] outline-none placeholder:text-[#666]" />
          <svg width="36" height="22" viewBox="0 0 36 22" className="shrink-0">
            <path d="M1 18q16 4 34 0v3q-17 2-34 0z" fill="#a8b83a" />
            <path d="M2 20V11Q1 5 6 4.500q5-.5 5.500 3.500 1.500 0 1.500-3l-1-3 1.800-.5Q15.500 6 14 9l-3 2v8.500H8V14H6v6z" fill="#8b7466" />
            <path d="M13 19V12q-1-5 4-6 2-1.500 5-.8Q31 3 34.500 9l.5 7-1.500-4v7.500h-3.500V14l-4 1v5h-3.500v-5l-3-.5q-3 .5-3 6h-2z" fill="#957d6d" />
            <path d="M5 7q3-1 4 2-1 3-4 1zM18 8q4-1 4 3-3 3-5 0z" fill="#735c50" />
            <path d="M15 13q-2 2-1.500 5" fill="none" stroke="#f4ead8" />
          </svg>
        </div>
        <div className="ml-1 flex min-w-0 flex-1 items-center justify-between">
          <TaskItem label="Task view">
            <svg width="20" height="18" viewBox="0 0 20 18"><path d="M6 0h13q1 0 1 1v10q0 1-1 1H6z" fill="#e6e4e4" /><path d="M1 6h12q1 0 1 1v9q0 1-1 1H1q-1 0-1-1V7q0-1 1-1z" fill="#7f7b7a" opacity=".9" /></svg>
          </TaskItem>
          <TaskItem label="Copilot"><CopilotLogo size={20} id="tc" /></TaskItem>
          <TaskItem label="Teams">
            <svg width="20" height="18" viewBox="0 0 20 18">
              <circle cx="11" cy="3" r="3" fill="#7b83eb" /><circle cx="17" cy="4" r="2.200" fill="#5059c9" />
              <path d="M13 7h7v5q0 3.500-3.500 3.500T13 12z" fill="#5059c9" />
              <path d="M6 7h9.500v5.500Q15.500 18 10.800 18T6 12.500z" fill="#7b83eb" />
              <rect y="5" width="10" height="10" rx="1" fill="#4b53bc" />
              <path d="M2.700 7.700h4.600M5 7.700V13" stroke="#fff" strokeWidth="1.200" />
            </svg>
          </TaskItem>
          <TaskItem label="File Explorer">
            <svg width="21" height="18" viewBox="0 0 21 18"><path d="M0 1.500Q0 .5 1 .5h6l2 2.500H0z" fill="#e8a317" /><path d="M0 3h20q1 0 1 1v12q0 1-1 1H0z" fill="#fcd04a" /><path d="M4 18v-3q0-2 2-2h9q2 0 2 2v3z" fill="#1f7fd0" /><path d="M6 15h9" stroke="#0b5394" strokeWidth="1.300" /></svg>
          </TaskItem>
          <TaskItem label="Store">
            <svg width="20" height="20" viewBox="0 0 20 20"><path d="M6 4V1h8v3" fill="none" stroke="#3aaee8" strokeWidth="1.500" /><path d="M0 4h20v13q0 2-2 2H2q-2 0-2-2z" fill="#f1f1f1" /><path d="M6 7.500h3.500V11H6z" fill="#f25022" /><path d="M10.500 7.500H14V11h-3.500z" fill="#7fba00" /><path d="M6 12h3.500v3.500H6z" fill="#00a4ef" /><path d="M10.500 12H14v3.500h-3.500z" fill="#ffb900" /></svg>
          </TaskItem>
          <TaskItem label="Armoury Crate">
            <svg width="18" height="20" viewBox="0 0 18 20"><path d="M9 1l8 4v10l-8 4-8-4V5z" fill="#3d4146" stroke="#6a6e74" /><path d="M9 1l1 8-6 6-3-1V5z" fill="#8b9096" /><path d="M10 5l5 10H8l3-2.500z" fill="#1f2226" /><path d="M4 14l6-5 1 3.500-3 2.500z" fill="#c3c7cb" /></svg>
          </TaskItem>
          <TaskItem label="Edge" mark="w-[6px] bg-[#9b918f]">
            <svg width="20" height="20" viewBox="0 0 20 20">
              <defs>
                <linearGradient id="edg" x1="0" y1="0" x2="1" y2="0.500"><stop offset="0" stopColor="#2aa8e0" /><stop offset="0.600" stopColor="#35c3b0" /><stop offset="1" stopColor="#6fdc5a" /></linearGradient>
              </defs>
              <circle cx="10" cy="10" r="10" fill="#1268b8" />
              <path d="M0 9.500C.5 4 5 0 10.200 0 16 0 20 4.200 20 8.800c0 3-2.500 5-5.200 5-2 0-2.800-.6-2.800-1.200 0-.5.7-.9.700-2.200C12.700 8 10.500 6 7.500 6 4 6 1 8 0 9.500z" fill="url(#edg)" />
              <path d="M7.500 9C6 12 7.500 17 13 17.500q3 .2 5.500-2Q15.500 20 10.500 20C6 19.500 4 15 7.500 9z" fill="#0c4a94" />
              <path d="M12.700 10.400c0 1.300-.7 1.700-.7 2.200 0 .6.800 1.200 2.800 1.200q2.500 0 4.500-1.500l-.8 3.200c-7 2.500-11-2-9-5.500z" fill="#2e1b19" />
            </svg>
          </TaskItem>
          <TaskItem label="Outlook">
            <svg width="21" height="20" viewBox="0 0 21 20"><path d="M5 6l8-5 7 5v12q0 1-1 1H6q-1 0-1-1z" fill="#1a6fc4" /><path d="M9 4h9v8H9z" fill="#2aa3ea" /><path d="M5 19l15-11v10q0 1-1 1z" fill="#5fd0fa" /><path d="M5 10l14 9H6q-1 0-1-1z" fill="#28a8ea" /><rect y="5" width="11" height="11" rx="1" fill="#0f5fb5" /><circle cx="5.500" cy="10.500" r="2.800" fill="none" stroke="#fff" strokeWidth="1.500" /></svg>
          </TaskItem>
          <TaskItem label="Opera" className="bg-[#864545]" mark="w-[6px] bg-[#f09aa5]">
            <svg width="19" height="19" viewBox="0 0 19 19"><ellipse cx="9.500" cy="9.500" rx="6.500" ry="7.300" fill="none" stroke="#e8202e" strokeWidth="4.200" /><path d="M13.500 2.500q4 2.500 4 7t-4 7q1.500-2.500 1.500-7t-1.500-7z" fill="#a30c1a" /></svg>
          </TaskItem>
          <TaskItem label="Steam" mark="w-[6px] bg-[#9b918f]">
            <svg width="20" height="20" viewBox="0 0 20 20">
              <defs><linearGradient id="stm" x1="0" y1="0" x2="0" y2="1"><stop offset="0" stopColor="#0c1c3c" /><stop offset="1" stopColor="#1c7fc0" /></linearGradient></defs>
              <circle cx="10" cy="10" r="10" fill="url(#stm)" />
              <path d="M0 10l7 3 3-2.500L11.500 6l5 3.500L10 13l-3 3-7-3z" fill="#fff" />
              <circle cx="13.500" cy="7.500" r="3.800" fill="#fff" /><circle cx="13.500" cy="7.500" r="2.300" fill="#fff" stroke="#14305c" />
              <circle cx="7" cy="14" r="2.700" fill="#fff" stroke="#14305c" strokeWidth=".7" />
            </svg>
          </TaskItem>
          <TaskItem label="FM24" mark="w-[6px] bg-[#9b918f]">
            <svg width="20" height="20" viewBox="0 0 20 20"><circle cx="10" cy="10" r="10" fill="#3d1a78" /><path d="M1 6q3-5 9-6L3 12z" fill="#e0447a" /><path d="M0 10q1 5 5 8l-1-8z" fill="#f07030" /><text x="10.500" y="14.500" fontSize="13" fontWeight="bold" fontFamily="Liberation Sans" textAnchor="middle" fill="#fff">24</text></svg>
          </TaskItem>
          <TaskItem label="Excel" className="bg-[#3c2a28]" mark="w-[14px] bg-[#58b8ee]"><ExcelLogo size={20} /></TaskItem>
        </div>
      </div>
      <div className="flex items-center justify-end pr-4">
        <Btn label="Hidden icons" className="mr-4">
          <svg width="9" height="6" viewBox="0 0 9 6" fill="none" stroke="#fff" strokeWidth="1.300"><path d="M.5 5l4-4 4 4" /></svg>
        </Btn>
        <button type="button" aria-label="Network, sound and battery" className="flex items-center gap-[6px]">
          <svg width="14" height="11" viewBox="0 0 14 11" fill="none" stroke="#fff" strokeWidth="1.100"><path d="M.7 4.200q6.300-6 12.600 0M2.700 6.300q4.300-4 8.600 0M4.700 8.300q2.300-2 4.600 0" /><circle cx="7" cy="9.700" r=".8" fill="#fff" /></svg>
          <svg width="13" height="11" viewBox="0 0 13 11" fill="none" stroke="#fff"><path d="M.5 3.500H3L6 1v9L3 7.500H.5zM8.500 3.500l4 4M12.500 3.500l-4 4" /></svg>
          <svg width="14" height="12" viewBox="0 0 14 12" fill="none" stroke="#fff"><path d="M4 2.500h7.500v7H1.500V7M13 5v2.500" /><path d="M3.500.5L1 4.500h1.500L2 7.500l3-4H3.500z" fill="#fff" /></svg>
        </button>
        <div className="w-[65px] text-right">
          <div>15:17</div>
          <div>16/05/2025</div>
        </div>
      </div>
    </footer>
  );
}

export default function App() {
  return (
    <div className="flex h-screen w-full flex-col overflow-hidden bg-[linear-gradient(90deg,#f2e9e7,#ece9e6_50%,#f3e8e6)] font-['Open_Sans',sans-serif]">
      <TitleBar />
      <MenuTabs />
      <Ribbon />
      <BackupBar />
      <FormulaBar />
      <Sheet />
      <SheetTabs />
      <StatusBar />
      <Taskbar />
    </div>
  );
}
